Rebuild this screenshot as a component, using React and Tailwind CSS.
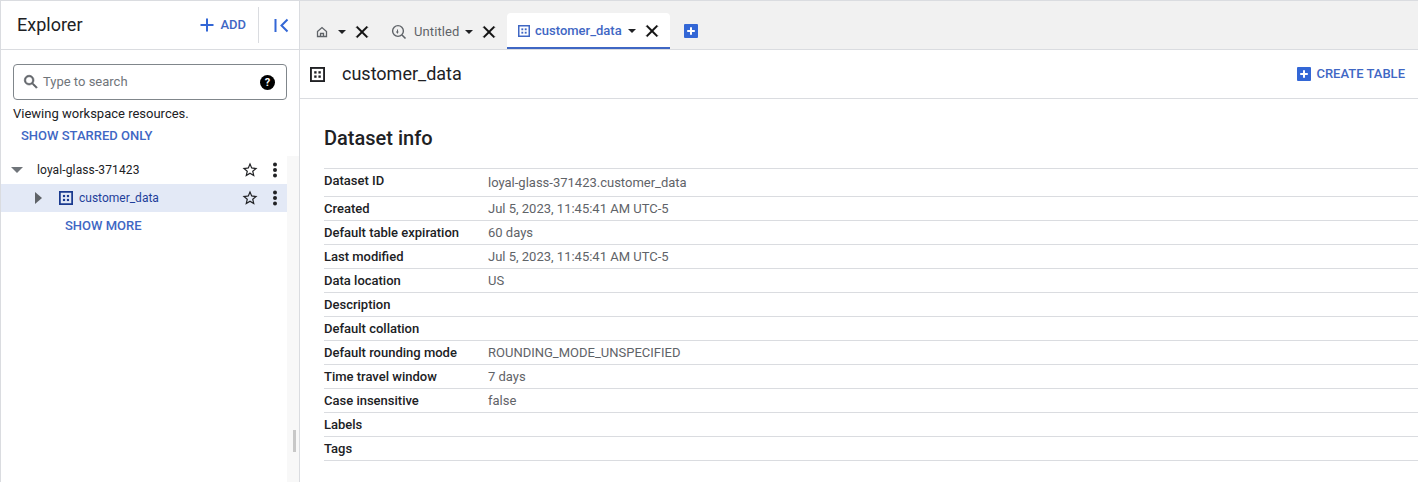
const rows = [
  ['Dataset ID', 'loyal-glass-371423.customer_data', 'h-[28px]'],
  ['Created', 'Jul 5, 2023, 11:45:41 AM UTC-5'],
  ['Default table expiration', '60 days'],
  ['Last modified', 'Jul 5, 2023, 11:45:41 AM UTC-5'],
  ['Data location', 'US'],
  ['Description', ''],
  ['Default collation', ''],
  ['Default rounding mode', 'ROUNDING_MODE_UNSPECIFIED'],
  ['Time travel window', '7 days'],
  ['Case insensitive', 'false'],
  ['Labels', ''],
  ['Tags', ''],
];

function DatasetIcon({ size = 16, color = '#202124' }) {
  return (
    <svg width={size} height={size} viewBox="0 0 16 16" className="shrink-0">
      <rect x="1" y="1" width="14" height="14" fill="none" stroke={color} strokeWidth="2" />
      <rect x="4.5" y="4.5" width="2.5" height="2.5" fill={color} />
      <rect x="9" y="4.5" width="2.5" height="2.5" fill={color} />
      <rect x="4.5" y="9" width="2.5" height="2.5" fill={color} />
      <rect x="9" y="9" width="2.5" height="2.5" fill={color} />
    </svg>
  );
}

function PlusBox({ size = 14 }) {
  return (
    <svg width={size} height={size} viewBox="0 0 14 14" className="shrink-0">
      <rect width="14" height="14" rx="1" fill="#3367d6" />
      <path d="M7 3.2v7.6M3.2 7h7.6" stroke="#fff" strokeWidth="2" />
    </svg>
  );
}

function Caret() {
  return <span className="block w-0 h-0 border-x-[4px] border-x-transparent border-t-[4px] border-t-[#202124] shrink-0" />;
}

function CloseIcon() {
  return (
    <svg width="20" height="20" viewBox="0 0 24 24" fill="#111" className="shrink-0">
      <path d="M19 6.41 17.59 5 12 10.59 6.41 5 5 6.41 10.59 12 5 17.59 6.41 19 12 13.41 17.59 19 19 17.59 13.41 12z" stroke="#111" strokeWidth="0.6" />
    </svg>
  );
}

function TreeActions() {
  return (
    <div className="flex items-center gap-[7px] pr-[3px]">
      <svg width="18" height="18" viewBox="0 0 24 24" fill="#202124">
        <path d="M22 9.24l-7.19-.62L12 2 9.19 8.63 2 9.24l5.46 4.73L5.82 21 12 17.27 18.18 21l-1.63-7.03L22 9.24zM12 15.4l-3.76 2.27 1-4.28-3.32-2.88 4.38-.38L12 6.1l1.71 4.04 4.38.38-3.32 2.88 1 4.28L12 15.4z" />
      </svg>
      <svg width="18" height="18" viewBox="0 0 18 18" fill="#202124">
        <circle cx="9" cy="3.5" r="2" />
        <circle cx="9" cy="9" r="2" />
        <circle cx="9" cy="14.5" r="2" />
      </svg>
    </div>
  );
}

export default function App() {
  return (
    <div className="w-[1418px] h-[482px] overflow-hidden flex bg-white border-t border-[#dadce0] text-[#202124] font-['Roboto',sans-serif]">
      <aside className="w-[300px] shrink-0 flex flex-col border-r border-l border-[#dadce0]">
        <div className="h-[49px] shrink-0 flex items-center border-b border-[#dadce0] pl-[16px]">
          <h2 className="text-[18px] leading-[24px] flex-1">Explorer</h2>
          <div className="flex items-center gap-[4px] text-[#3f67c4] text-[13px] font-medium pr-[12px]">
            <svg width="18" height="18" viewBox="0 0 18 18" stroke="#3367d6" strokeWidth="2">
              <path d="M9 2.5v13M2.5 9h13" />
            </svg>
            <span>ADD</span>
          </div>
          <div className="h-[36px] w-px bg-[#dadce0]" />
          <div className="w-[40px] flex items-center pl-[15px]">
            <svg width="15" height="15" viewBox="0 0 15 15" fill="none" stroke="#3367d6" strokeWidth="2">
              <path d="M1.5 1v13M13.5 1.5 7.5 7.5l6 6" />
            </svg>
          </div>
        </div>

        <div className="flex-1 flex flex-col min-h-0 pt-[14px]">
          <div className="mx-[12px] w-[274px] h-[36px] shrink-0 border border-[#80868b] rounded-[4px] flex items-center pl-[8px] pr-[11px]">
            <svg width="18" height="18" viewBox="0 0 24 24" fill="#5f6368" stroke="#5f6368" strokeWidth="0.8" className="shrink-0">
              <path d="M15.5 14h-.79l-.28-.27A6.471 6.471 0 0 0 16 9.5 6.5 6.5 0 1 0 9.5 16c1.61 0 3.09-.59 4.23-1.57l.27.28v.79l5 4.99L20.49 19l-4.99-5zm-6 0C7.01 14 5 11.99 5 9.5S7.01 5 9.5 5 14 7.01 14 9.5 11.99 14 9.5 14z" />
            </svg>
            <span className="ml-[3px] flex-1 text-[13px] text-[#70757a]">Type to search</span>
            <span className="w-[15px] h-[15px] rounded-full bg-black text-white text-[11px] font-bold leading-[15px] text-center">?</span>
          </div>
          <p className="mx-[12px] mt-[6px] text-[13px] leading-[15px]">Viewing workspace resources.</p>
          <p className="mx-[20px] mt-[7px] text-[13px] leading-[15px] font-medium text-[#3f67c4]">SHOW STARRED ONLY</p>

          <div className="flex-1 flex mt-[13px] min-h-0">
            <div className="w-[286px]">
              <div className="h-[28px] flex items-center pl-[10px]">
                <span className="w-0 h-0 border-x-[6px] border-x-transparent border-t-[6px] border-t-[#70757a]" />
                <span className="ml-[14px] flex-1 text-[12px] tracking-[0.12px]">loyal-glass-371423</span>
                <TreeActions />
              </div>
              <div className="h-[28px] flex items-center pl-[34px] bg-[#e3e9f6]">
                <span className="w-0 h-0 border-y-[6px] border-y-transparent border-l-[7px] border-l-[#5f6368]" />
                <span className="ml-[17px]"><DatasetIcon size={14} color="#1a3a8f" /></span>
                <span className="ml-[6px] flex-1 text-[12px] text-[#1f3f9a]">customer_data</span>
                <TreeActions />
              </div>
              <p className="pl-[64px] pt-[6px] text-[13px] leading-[15px] font-medium text-[#3f67c4]">SHOW MORE</p>
            </div>
            <div className="w-[12px] bg-[#f8f8f8] flex flex-col justify-end items-start pl-[6px] pb-[30px]">
              <span className="w-[3px] h-[22px] bg-[#c8c8c8]" />
            </div>
          </div>
        </div>
      </aside>

      <main className="flex-1 min-w-0 flex flex-col">
        <div className="h-[49px] shrink-0 bg-[#f1f1f1] border-b border-[#dadce0] flex items-end pl-[4px]">
          <div className="h-[36px] w-[70px] flex items-center pt-[1px] pl-[11px]">
            <svg width="14" height="14" viewBox="0 0 14 14" className="shrink-0">
              <path d="M2.5 6.5 7 2.5l4.5 4v5h-9z M5.5 11.5V8.5h3v3" fill="none" stroke="#5f6368" strokeWidth="1.3" />
            </svg>
            <span className="ml-[9px]"><Caret /></span>
            <span className="ml-[6px]"><CloseIcon /></span>
          </div>
          <div className="h-[36px] w-[133px] flex items-center pt-[1px] pl-[17px] text-[13px] text-[#5f6368]">
            <svg width="16" height="16" viewBox="0 0 16 16" className="shrink-0">
              <circle cx="7" cy="7" r="5.4" fill="none" stroke="#5f6368" strokeWidth="1.4" />
              <path d="m11 11 3.5 3.5" stroke="#5f6368" strokeWidth="1.6" />
              <path d="M5 8h2.5M6.5 5.5v4" stroke="#5f6368" strokeWidth="1" />
            </svg>
            <span className="ml-[7px] tracking-[0.1px]">Untitled</span>
            <span className="ml-[6px]"><Caret /></span>
            <span className="ml-[6px]"><CloseIcon /></span>
          </div>
          <div className="h-[36px] w-[163px] bg-white rounded-t-[4px] border-b-2 border-[#3f67c4] flex items-center pt-[1px] pl-[11px] text-[13px] text-[#3f67c4] font-medium">
            <DatasetIcon size={12} color="#3f67c4" />
            <span className="ml-[5px]">customer_data</span>
            <span className="ml-[6px]"><Caret /></span>
            <span className="ml-[6px]"><CloseIcon /></span>
          </div>
          <div className="h-[36px] flex items-center ml-[14px]">
            <PlusBox />
          </div>
        </div>

        <div className="h-[49px] shrink-0 border-b border-[#dadce0] flex items-center pl-[10px] pr-[13px]">
          <DatasetIcon size={15} color="#202124" />
          <h1 className="ml-[17px] flex-1 text-[18px] leading-[24px]">customer_data</h1>
          <PlusBox />
          <span className="ml-[5px] text-[13px] font-medium text-[#3f67c4]">CREATE TABLE</span>
        </div>

        <div className="pl-[24px] flex-1 min-h-0">
          <h3 className="mt-[25px] text-[20px] leading-[28px] font-medium">Dataset info</h3>
          <div className="mt-[16px] border-t border-[#dadce0]">
            {rows.map(([label, value, height]) => (
              <div key={label} className={`${height || 'h-[24px]'} flex items-center border-b border-[#dadce0] text-[13px]`}>
                <span className={`w-[164px] shrink-0 font-medium ${height ? 'mb-[3px]' : ''}`}>{label}</span>
                <span className={`text-[#5f6368] ${height ? 'mt-[1px]' : ''}`}>{value}</span>
              </div>
            ))}
          </div>
        </div>
      </main>
    </div>
  );
}
